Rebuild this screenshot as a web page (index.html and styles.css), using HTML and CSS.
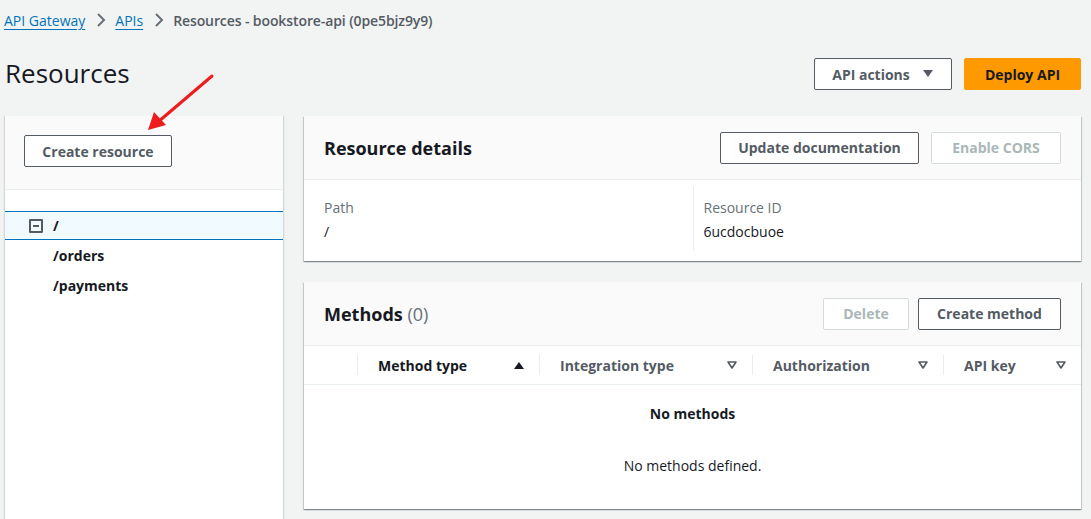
FILE: index.html
```html
<!DOCTYPE html>
<html>
<head>
<meta charset="utf-8">
<link rel="stylesheet" href="styles.css">
</head>
<body>
<div class="page">
  <nav class="crumbs">
    <a class="crumb-link">API Gateway</a>
    <svg class="chev" width="16" height="16" viewBox="0 0 16 16"><path d="M5 2l6 6-6 6" fill="none" stroke="#687078" stroke-width="2"/></svg>
    <a class="crumb-link">APIs</a>
    <svg class="chev" width="16" height="16" viewBox="0 0 16 16"><path d="M5 2l6 6-6 6" fill="none" stroke="#687078" stroke-width="2"/></svg>
    <span class="crumb-current">Resources - bookstore-api (0pe5bjz9y9)</span>
  </nav>

  <header class="page-head">
    <h1 class="title">Resources</h1>
    <div class="head-actions">
      <button class="btn btn-actions">API actions
        <svg width="12" height="12" viewBox="0 0 12 12"><path d="M1 2h10L6 9z" fill="#545b64"/></svg>
      </button>
      <button class="btn btn-primary">Deploy API</button>
    </div>
  </header>

  <div class="layout">
    <aside class="tree-panel">
      <div class="tree-head">
        <button class="btn btn-create-res">Create resource</button>
      </div>
      <ul class="tree">
        <li class="tree-row selected">
          <span class="toggle"><span class="toggle-bar"></span></span>
          <span class="node">/</span>
        </li>
        <li class="tree-row"><span class="spacer"></span><span class="node">/orders</span></li>
        <li class="tree-row"><span class="spacer"></span><span class="node">/payments</span></li>
      </ul>
    </aside>

    <main class="content">
      <section class="card">
        <div class="card-head">
          <h2 class="card-title">Resource details</h2>
          <div class="card-actions">
            <button class="btn btn-doc">Update documentation</button>
            <button class="btn btn-disabled btn-cors">Enable CORS</button>
          </div>
        </div>
        <div class="details">
          <div class="detail-col">
            <div class="label">Path</div>
            <div class="value">/</div>
          </div>
          <div class="detail-col divided">
            <div class="label">Resource ID</div>
            <div class="value">6ucdocbuoe</div>
          </div>
        </div>
      </section>

      <section class="card methods">
        <div class="card-head">
          <h2 class="card-title">Methods <span class="count">(0)</span></h2>
          <div class="card-actions">
            <button class="btn btn-disabled btn-delete">Delete</button>
            <button class="btn btn-method">Create method</button>
          </div>
        </div>
        <div class="table-head">
          <div class="th th-check"></div>
          <div class="th th-method"><span class="th-label active">Method type</span>
            <svg width="12" height="12" viewBox="0 0 12 12"><path d="M1 10h10L6 3z" fill="#16191f"/></svg></div>
          <div class="th th-integ"><span class="th-label">Integration type</span>
            <svg width="12" height="12" viewBox="0 0 12 12"><path d="M2 3h8L6 9z" fill="none" stroke="#545b64" stroke-width="1.6" stroke-linejoin="round"/></svg></div>
          <div class="th th-auth"><span class="th-label">Authorization</span>
            <svg width="12" height="12" viewBox="0 0 12 12"><path d="M2 3h8L6 9z" fill="none" stroke="#545b64" stroke-width="1.6" stroke-linejoin="round"/></svg></div>
          <div class="th th-key"><span class="th-label">API key</span>
            <svg width="12" height="12" viewBox="0 0 12 12"><path d="M2 3h8L6 9z" fill="none" stroke="#545b64" stroke-width="1.6" stroke-linejoin="round"/></svg></div>
        </div>
        <div class="empty">
          <div class="empty-title">No methods</div>
          <div class="empty-text">No methods defined.</div>
        </div>
      </section>
    </main>
  </div>

  <svg class="annot" width="80" height="70" viewBox="0 0 80 70">
    <line x1="72" y1="4" x2="18" y2="50" stroke="#ee1c1c" stroke-width="3" stroke-linecap="round"/>
    <path d="M8 58 L14 40 L26 53 Z" fill="#ee1c1c"/>
  </svg>
</div>
</body>
</html>
```

FILE: styles.css
```css
* { box-sizing: border-box; }
html, body { margin: 0; padding: 0; }
body {
  background: #f2f3f3;
  font-family: "Open Sans", "Noto Sans", sans-serif;
  font-size: 14px;
  color: #16191f;
  width: 1091px;
  height: 519px;
  overflow: hidden;
}
.page {
  position: relative;
  padding: 9px 10px 0 4px;
}
.crumbs {
  display: flex;
  align-items: center;
  height: 22px;
}
.crumb-link {
  color: #0073bb;
  text-decoration: underline;
  text-underline-offset: 3px;
}
.chev { margin: 0 6px 0 8px; }
.crumb-current { color: #545b64; font-weight: 600; letter-spacing: -0.1px; }

.page-head {
  display: flex;
  justify-content: space-between;
  align-items: center;
  margin-top: 21px;
  height: 44px;
}
.title {
  margin: 0;
  font-size: 26px;
  font-weight: 400;
  line-height: 36px;
  padding-left: 1px;
  margin-top: -2px;
}
.head-actions { display: flex; gap: 12px; padding-right: 0; }

.btn {
  font-family: inherit;
  font-size: 14px;
  font-weight: 700;
  color: #545b64;
  background: #fff;
  border: 1px solid #545b64;
  border-radius: 2px;
  height: 32px;
  padding: 0 8px;
  display: inline-flex;
  align-items: center;
  justify-content: center;
  gap: 12px;
  white-space: nowrap;
  cursor: pointer;
}
.btn-actions { width: 138px; }
.btn-primary {
  background: #ff9900;
  border-color: #ff9900;
  color: #16191f;
  width: 117px;
}
.btn-disabled {
  color: #aab7b8;
  border-color: #d5dbdb;
}
.btn-create-res { width: 148px; }
.btn-doc { width: 199px; }
.btn-cors { width: 130px; }
.btn-delete { width: 86px; }
.btn-method { width: 143px; }

.layout {
  display: grid;
  grid-template-columns: 280px 1fr;
  gap: 20px;
  margin-top: 20px;
}

.tree-panel {
  background: #fff;
  height: 420px;
  border-left: 1px solid #d5dbdb;
  border-right: 1px solid #d5dbdb;
  box-shadow: 0 1px 1px 0 rgba(0,28,36,0.2);
}
.tree-head {
  background: #fafafa;
  height: 74px;
  padding: 19px 19px 0;
  border-bottom: 1px solid #eaeded;
}
.tree {
  list-style: none;
  margin: 0;
  padding: 21px 0 0;
}
.tree-row {
  display: flex;
  align-items: center;
  height: 30px;
  padding-left: 24px;
  font-weight: 700;
}
.tree-row.selected {
  background: #f1faff;
  border-top: 1px solid #0073bb;
  border-bottom: 1px solid #0073bb;
  height: 29px;
}
.toggle {
  width: 14px;
  height: 14px;
  border: 2px solid #545b64;
  border-radius: 1px;
  display: flex;
  align-items: center;
  justify-content: center;
  margin-right: 10px;
}
.toggle-bar { width: 6px; height: 2px; background: #545b64; }
.spacer { width: 14px; margin-right: 10px; }

.content { display: flex; flex-direction: column; gap: 21px; }
.card {
  background: #fff;
  box-shadow: 0 1px 1px 0 rgba(0,28,36,0.3), 1px 1px 1px 0 rgba(0,28,36,0.15), -1px 1px 1px 0 rgba(0,28,36,0.15);
}
.card-head {
  background: #fafafa;
  height: 64px;
  padding: 0 20px;
  display: flex;
  align-items: center;
  justify-content: space-between;
  border-bottom: 1px solid #eaeded;
}
.card-title {
  margin: 0;
  font-size: 18px;
  font-weight: 700;
}
.count { color: #687078; font-weight: 400; }
.card-actions { display: flex; gap: 12px; }
.methods .card-actions { gap: 9px; }

.details {
  display: grid;
  grid-template-columns: 1fr 1fr;
  padding: 6px 20px 10px;
}
.detail-col { padding: 11px 0 8px; }
.detail-col.divided { border-left: 1px solid #eaeded; padding-left: 10px; }
.label { color: #687078; line-height: 22px; }
.value { line-height: 22px; margin-top: 2px; }

.methods { height: 227px; }
.table-head {
  display: grid;
  grid-template-columns: 53px 182px 213px 191px 1fr;
  height: 39px;
  border-bottom: 1px solid #eaeded;
  align-items: center;
}
.th {
  display: flex;
  align-items: center;
  justify-content: space-between;
  height: 20px;
  padding: 0 14px 0 20px;
  border-left: 1px solid #eaeded;
  font-weight: 700;
  color: #545b64;
}
.th-check { border-left: none; }
.th-label.active { color: #16191f; }
.empty { text-align: center; padding-top: 19px; }
.empty-title { font-weight: 700; line-height: 20px; }
.empty-text { margin-top: 32px; line-height: 20px; }

.annot {
  position: absolute;
  left: 140px;
  top: 72px;
}
```
